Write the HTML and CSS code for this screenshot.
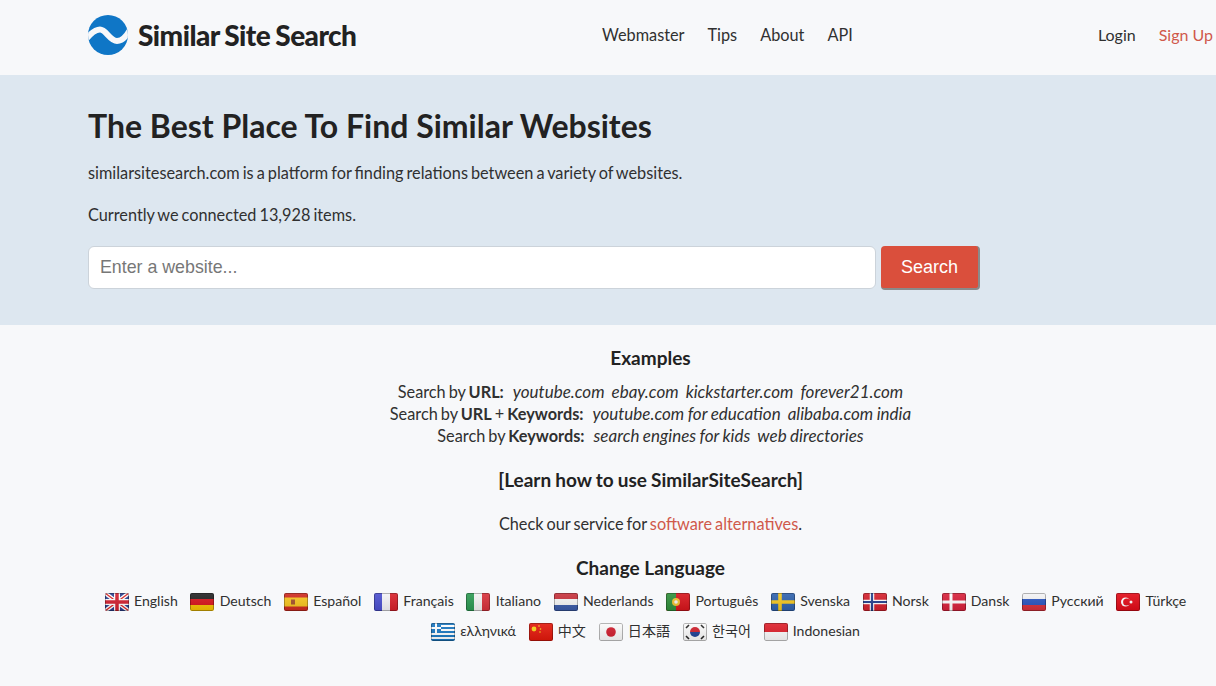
FILE: index.html
```html
<!DOCTYPE html>
<html lang="en">
<head>
<meta charset="utf-8">
<title>Similar Site Search</title>
<link rel="stylesheet" href="styles.css">
</head>
<body>
<header class="site-header">
  <div class="container header-row">
    <a class="brand" href="#">
      <svg class="logo" viewBox="0 0 40 40" width="40" height="40">
        <defs><clipPath id="logo-clip"><circle cx="20" cy="20" r="20"/></clipPath></defs>
        <circle cx="20" cy="20" r="20" fill="#0f76c6"/>
        <path clip-path="url(#logo-clip)" d="M-2 24C4 17 8 14.500 12 14.500C18 14.500 22 26 29 26C33 26 38 22 42 15" fill="none" stroke="#f7f8fa" stroke-width="6"/>
      </svg>
      <span class="brand-name">Similar Site Search</span>
    </a>
    <nav class="main-nav">
      <a href="#">Webmaster</a>
      <a href="#">Tips</a>
      <a href="#">About</a>
      <a href="#">API</a>
    </nav>
    <nav class="user-nav">
      <a href="#">Login</a>
      <a class="accent" href="#">Sign Up</a>
    </nav>
  </div>
</header>

<section class="hero">
  <div class="container">
    <h1>The Best Place To Find Similar Websites</h1>
    <p>similarsitesearch.com is a platform for finding relations between a variety of websites.</p>
    <p>Currently we connected 13,928 items.</p>
    <form class="search">
      <input type="text" placeholder="Enter a website...">
      <button type="button">Search</button>
    </form>
  </div>
</section>

<main class="container content">
  <h2>Examples</h2>
  <div class="examples">
    <div>Search by <b>URL:</b> <i>youtube.com</i> <i>ebay.com</i> <i>kickstarter.com</i> <i>forever21.com</i></div>
    <div>Search by <b>URL</b> + <b>Keywords:</b> <i>youtube.com for education</i> <i>alibaba.com india</i></div>
    <div>Search by <b>Keywords:</b> <i>search engines for kids</i> <i>web directories</i></div>
  </div>
  <h2 class="learn">[<a href="#">Learn how to use SimilarSiteSearch</a>]</h2>
  <p class="check">Check our service for <a class="accent" href="#">software alternatives</a>.</p>
  <h2 class="change">Change Language</h2>
  <div class="langs">
    <a href="#"><span class="flag"><svg viewBox="0 0 24 18"><rect width="24" height="18" fill="#2a3f8f"/><path d="M0 0L24 18M24 0L0 18" stroke="#fff" stroke-width="4"/><path d="M0 0L24 18M24 0L0 18" stroke="#d22" stroke-width="1.300"/><path d="M12 0V18M0 9H24" stroke="#fff" stroke-width="6"/><path d="M12 0V18M0 9H24" stroke="#d3202f" stroke-width="3.500"/></svg></span>English</a>
    <a href="#"><span class="flag"><svg viewBox="0 0 24 18"><rect width="24" height="6" fill="#222"/><rect y="6" width="24" height="6" fill="#d8141b"/><rect y="12" width="24" height="6" fill="#f7c400"/></svg></span>Deutsch</a>
    <a href="#"><span class="flag"><svg viewBox="0 0 24 18"><rect width="24" height="18" fill="#cf2a1f"/><rect y="4.500" width="24" height="9" fill="#f7c51e"/><rect x="7" y="6.500" width="4" height="5" fill="#a5502a"/></svg></span>Español</a>
    <a href="#"><span class="flag"><svg viewBox="0 0 24 18"><rect width="8" height="18" fill="#4a4fd0"/><rect x="8" width="8" height="18" fill="#f4f4f8"/><rect x="16" width="8" height="18" fill="#d8202a"/></svg></span>Français</a>
    <a href="#"><span class="flag"><svg viewBox="0 0 24 18"><rect width="8" height="18" fill="#2c9a52"/><rect x="8" width="8" height="18" fill="#f4f4f4"/><rect x="16" width="8" height="18" fill="#d8303a"/></svg></span>Italiano</a>
    <a href="#"><span class="flag"><svg viewBox="0 0 24 18"><rect width="24" height="6" fill="#c8323c"/><rect y="6" width="24" height="6" fill="#f6f6f6"/><rect y="12" width="24" height="6" fill="#3a5aa8"/></svg></span>Nederlands</a>
    <a href="#"><span class="flag"><svg viewBox="0 0 24 18"><rect width="24" height="18" fill="#d8141b"/><rect width="10" height="18" fill="#2f8f3a"/><circle cx="10" cy="9" r="4" fill="#f2c12e"/><circle cx="10" cy="9" r="1.800" fill="#f4f4f4"/></svg></span>Português</a>
    <a href="#"><span class="flag"><svg viewBox="0 0 24 18"><rect width="24" height="18" fill="#2f62ad"/><path d="M9 0V18M0 9H24" stroke="#f6c81e" stroke-width="3.600"/></svg></span>Svenska</a>
    <a href="#"><span class="flag"><svg viewBox="0 0 24 18"><rect width="24" height="18" fill="#d4202c"/><path d="M9 0V18M0 9H24" stroke="#fff" stroke-width="4.500"/><path d="M9 0V18M0 9H24" stroke="#24408e" stroke-width="2.200"/></svg></span>Norsk</a>
    <a href="#"><span class="flag"><svg viewBox="0 0 24 18"><rect width="24" height="18" fill="#d8203a"/><path d="M9 0V18M0 9H24" stroke="#fff" stroke-width="3"/></svg></span>Dansk</a>
    <a href="#"><span class="flag"><svg viewBox="0 0 24 18"><rect width="24" height="6" fill="#f4f4f6"/><rect y="6" width="24" height="6" fill="#2a55c0"/><rect y="12" width="24" height="6" fill="#d8303a"/></svg></span>Русский</a>
    <a href="#"><span class="flag"><svg viewBox="0 0 24 18"><rect width="24" height="18" fill="#e30a17"/><circle cx="9.500" cy="9" r="4.500" fill="#fff"/><circle cx="10.700" cy="9" r="3.600" fill="#e30a17"/><circle cx="15" cy="9" r="1.500" fill="#fff"/></svg></span>Türkçe</a>
    <a href="#"><span class="flag"><svg viewBox="0 0 24 18"><rect width="24" height="18" fill="#1a78c2"/><path d="M0 3H24M0 7H24M0 11H24M0 15H24" stroke="#fff" stroke-width="2"/><rect width="10" height="10" fill="#1a78c2"/><path d="M5 0V10M0 5H10" stroke="#fff" stroke-width="2"/></svg></span>ελληνικά</a>
    <a href="#"><span class="flag"><svg viewBox="0 0 24 18"><rect width="24" height="18" fill="#e3170a"/><circle cx="5" cy="6" r="2.400" fill="#f7d417"/><circle cx="10" cy="3" r=".8" fill="#f7d417"/><circle cx="11.500" cy="6" r=".8" fill="#f7d417"/><circle cx="11" cy="9" r=".8" fill="#f7d417"/></svg></span>中文</a>
    <a href="#"><span class="flag"><svg viewBox="0 0 24 18"><rect width="24" height="18" fill="#fbfbfb"/><circle cx="12" cy="9" r="4.800" fill="#d01c2c"/></svg></span>日本語</a>
    <a href="#"><span class="flag"><svg viewBox="0 0 24 18"><rect width="24" height="18" fill="#fbfbfb"/><path d="M7 9a5 5 0 0 1 10 0z" fill="#d0202c"/><path d="M7 9a5 5 0 0 0 10 0z" fill="#1c3f94"/><path d="M3 5L6 2M3 13L6 16M18 2L21 5M18 16L21 13" stroke="#222" stroke-width="1.600"/></svg></span>한국어</a>
    <a href="#"><span class="flag"><svg viewBox="0 0 24 18"><rect width="24" height="9" fill="#de1f2a"/><rect y="9" width="24" height="9" fill="#fbfbfb"/></svg></span>Indonesian</a>
  </div>
</main>
</body>
</html>
```
FILE: styles.css
```css
* { box-sizing: border-box; }
html, body { margin: 0; padding: 0; }
body {
  background: #f7f8fa;
  color: #303030;
  font-family: Lato, "Noto Sans CJK KR", "Noto Sans CJK JP", sans-serif;
  font-size: 16.3px;
  word-spacing: -1.15px;
  line-height: 22px;
  height: 686px;
  overflow: hidden;
}
a { color: inherit; text-decoration: none; }
.container { width: 1124px; margin-left: 88px; }
.accent { color: #d0594b; }

.site-header { height: 75px; }
.header-row { display: flex; align-items: center; height: 69px; margin-bottom: 6px; }
.brand { display: flex; align-items: center; width: 514px; }
.logo { display: block; margin-top: 1px; }
.brand-name {
  margin-left: 10px;
  font-size: 28px;
  font-weight: 900;
  letter-spacing: -0.55px;
  word-spacing: -1px;
  color: #222;
}
.main-nav { display: flex; gap: 23px; font-size: 16.3px; word-spacing: 0; }
.user-nav { display: flex; gap: 23px; margin-left: auto; font-size: 16px; word-spacing: 0; margin-right: -1px; }

.hero { background: #dde7f0; height: 250px; padding-top: 30px; }
.hero h1 { margin: 0; font-size: 32px; line-height: 42px; font-weight: 700; color: #222; word-spacing: 0; }
.hero p { margin: 15px 0 0; line-height: 22px; }
.hero p + p { margin-top: 20px; }
.search { display: flex; align-items: flex-start; margin-top: 20px; }
.search input {
  width: 788px;
  height: 43px;
  padding: 0 11px;
  border: 1px solid #ccd3da;
  border-radius: 6px;
  background: #fff;
  font-family: "Liberation Sans", sans-serif;
  font-size: 17.8px;
  outline: none;
}
.search input::placeholder { color: #777; opacity: 1; }
.search button {
  width: 99px;
  height: 44px;
  margin-left: 5px;
  border: 0;
  border-right: 2px solid #8a8a8a;
  border-bottom: 2px solid #8a8a8a;
  border-radius: 4px;
  background: #da4f3c;
  color: #fff;
  font-family: "Liberation Sans", sans-serif;
  font-size: 18px;
}

.content { text-align: center; padding-top: 21px; padding-left: 1px; }
.content h2 { margin: 0; font-size: 19px; line-height: 24px; font-weight: 700; color: #222; word-spacing: 0; }
.examples { margin-top: 11px; }
.examples i { font-size: 17px; margin-left: 4px; word-spacing: -0.5px; }
.examples b + i { margin-left: 6px; }
.content .learn { margin-top: 21px; word-spacing: -0.5px; }
.check { margin: 21px 0 0; }
.content .change { margin-top: 21px; }
.langs {
  display: flex;
  flex-wrap: wrap;
  justify-content: center;
  column-gap: 12.7px;
  margin-top: 6px;
  padding-right: 10px;
  font-size: 14.1px;
  line-height: 30px;
  word-spacing: 0;
}
.langs a { display: flex; align-items: center; white-space: nowrap; }
.flag {
  position: relative;
  flex: none;
  width: 24px;
  height: 18px;
  margin-top: 2px;
  margin-right: 5.2px;
  border-radius: 2px;
  overflow: hidden;
}
.flag svg { display: block; width: 24px; height: 18px; }
.flag::after {
  content: "";
  position: absolute;
  inset: 0;
  border-radius: 2px;
  background: linear-gradient(rgba(255,255,255,.1), rgba(0,0,0,.1));
  box-shadow: inset 0 0 0 1px rgba(0,0,0,.28);
}
```
